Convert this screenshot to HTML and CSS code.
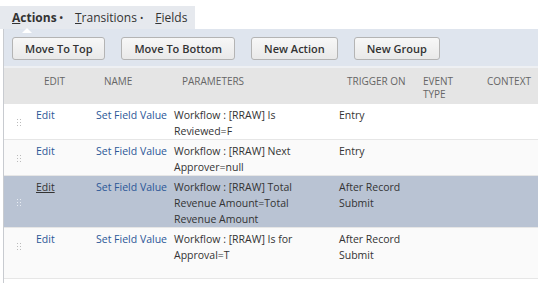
FILE: index.html
```html
<!DOCTYPE html>
<html>
<head>
    <title>Workflow Actions</title>
    <link rel="stylesheet" href="styles.css">
</head>
<body>
    <div class="tabs">
        <span class="tab active"><u>A</u>ctions<span class="dot">•</span></span>
        <span class="tab"><u>T</u>ransitions<span class="dot">•</span></span>
        <span class="tab"><u>F</u>ields</span>
    </div>
    <div class="panel">
        <div class="toolbar">
            <button>Move To Top</button>
            <button>Move To Bottom</button>
            <button>New Action</button>
            <button>New Group</button>
        </div>
        <table class="grid">
            <colgroup>
                <col class="c-handle"><col class="c-edit"><col class="c-name"><col class="c-params"><col class="c-trigger"><col class="c-event"><col>
            </colgroup>
            <thead>
                <tr>
                    <th></th>
                    <th>Edit</th>
                    <th>Name</th>
                    <th>Parameters</th>
                    <th>Trigger On</th>
                    <th>Event<br>Type</th>
                    <th>Context</th>
                </tr>
            </thead>
            <tbody>
                <tr>
                    <td class="handle"><span class="grip"></span></td>
                    <td><a href="#">Edit</a></td>
                    <td><a href="#">Set Field Value</a></td>
                    <td class="params">Workflow : [RRAW] Is Reviewed=F</td>
                    <td>Entry</td>
                    <td></td>
                    <td></td>
                </tr>
                <tr class="alt">
                    <td class="handle"><span class="grip"></span></td>
                    <td><a href="#">Edit</a></td>
                    <td><a href="#">Set Field Value</a></td>
                    <td class="params">Workflow : [RRAW] Next Approver=null</td>
                    <td>Entry</td>
                    <td></td>
                    <td></td>
                </tr>
                <tr class="selected">
                    <td class="handle"><span class="grip"></span></td>
                    <td><a href="#" class="hover">Edit</a></td>
                    <td><a href="#">Set Field Value</a></td>
                    <td class="params">Workflow : [RRAW] Total Revenue Amount=Total Revenue Amount</td>
                    <td>After Record Submit</td>
                    <td></td>
                    <td></td>
                </tr>
                <tr class="alt last">
                    <td class="handle"><span class="grip"></span></td>
                    <td><a href="#">Edit</a></td>
                    <td><a href="#">Set Field Value</a></td>
                    <td class="params">Workflow : [RRAW] Is for Approval=T</td>
                    <td>After Record Submit</td>
                    <td></td>
                    <td></td>
                </tr>
            </tbody>
        </table>
    </div>
</body>
</html>
```

FILE: styles.css
```css
body { margin: 0; padding-top: 5px; font-family: "Open Sans", Arial, sans-serif; color: #333; background: #fff; }
.tabs { display: inline-flex; gap: 12px; height: 23px; align-items: center; padding: 0 12px; background: #e6e9ee; font-size: 12px; box-sizing: border-box; width: 195px; }
.tab { color: #333; position: relative; white-space: nowrap; }
.tab.active { font-weight: bold; }
.tab.active::after { content: ""; position: absolute; left: 10px; bottom: -7px; border: 5px solid transparent; border-bottom-color: #fff; border-top: 0; }
.dot { font-size: 9px; margin-left: 3px; vertical-align: 1px; }
.panel { background: #fff; margin-left: 3px; border-left: 1px solid #c8cbd0; min-height: 255px; }
.toolbar { display: flex; gap: 16px; padding: 8px 0 6px 8px; background: #dfe5ee; }
button { font-family: "Open Sans", Arial, sans-serif; font-size: 11px; font-weight: 600; color: #333; height: 23px; padding: 0 12px; background: linear-gradient(#f7f7f7, #e9e9e9); border: 1px solid #b4b4b4; border-radius: 3px; }
.grid { width: 100%; border-collapse: collapse; table-layout: fixed; font-size: 10.5px; background: #fff; border-top: 2px solid #eef0f3; }
.c-handle { width: 26px; }
.c-edit { width: 60px; }
.c-name { width: 78px; }
.c-params { width: 165px; }
.c-trigger { width: 76px; }
.c-event { width: 64px; }
th { background: #e5e5e5; color: #666; font-weight: normal; font-size: 10px; text-transform: uppercase; text-align: left; vertical-align: top; line-height: 13px; padding: 7px 0 0 14px; height: 29px; white-space: nowrap; }
td { vertical-align: top; line-height: 16px; padding: 3px 1px 0 6px; border-bottom: 1px solid #e6e6e6; }
td a { color: #2b5797; text-decoration: none; white-space: nowrap; }
tr.alt td { background: #fafafa; }
tr.selected td { background: #b9c3d3; }
tr.last td { padding-bottom: 15px; }
td.params { padding-right: 30px; }
td a.hover { color: #333; text-decoration: underline; }
td.handle { vertical-align: middle; padding: 0 0 0 12px; }
.grip { display: block; width: 5px; height: 8px; background-image: radial-gradient(circle, #bbb 1px, transparent 1px); background-size: 3px 3px; }
tr.selected .grip { background-image: radial-gradient(circle, #e8ecf2 1px, transparent 1px); }
```
